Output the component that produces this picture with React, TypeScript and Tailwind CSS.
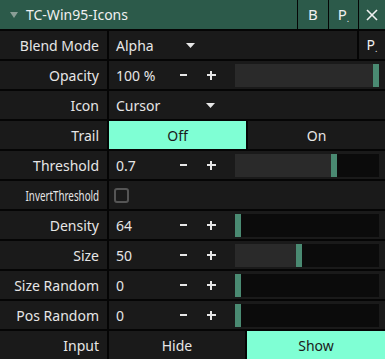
import React from "react";

const font = { fontFamily: '"Noto Sans", "Open Sans", sans-serif' };

function Label({ children, small }: { children: React.ReactNode; small?: boolean }) {
  return (
    <div className="w-[107px] shrink-0 bg-[#1a1a1a] flex items-center justify-end pr-[8px] text-[#e6e6e6] overflow-hidden">
      {small ? (
        <span className="text-[14px] whitespace-nowrap inline-block origin-right scale-x-[0.7]">{children}</span>
      ) : (
        <span className="text-[14px] whitespace-nowrap">{children}</span>
      )}
    </div>
  );
}

function Row({ children }: { children: React.ReactNode }) {
  return <div className="flex h-[28px] gap-[2px]">{children}</div>;
}

function Arrow() {
  return (
    <svg width="9" height="5" viewBox="0 0 9 5">
      <polygon points="0,0 9,0 4.5,5" fill="#e6e6e6" />
    </svg>
  );
}

function PDot({ size = 14 }: { size?: number }) {
  return (
    <span className="text-[#f0f0f0] leading-none" style={{ fontSize: size }}>
      P<span className="text-[9px] relative top-[2px]">.</span>
    </span>
  );
}

function SliderRow({ label, value, handle, small }: { label: string; value: string; handle: number; small?: boolean }) {
  return (
    <Row>
      <Label small={small}>{label}</Label>
      <div className="flex-1 bg-[#1a1a1a] flex items-center text-[#e6e6e6]">
        <div className="w-[60px] pl-[7px] text-[14px]">{value}</div>
        <div className="w-[28px] flex justify-center">
          <div className="w-[7px] h-[2px] bg-[#e6e6e6]" />
        </div>
        <div className="w-[28px] flex justify-center items-center relative h-[10px]">
          <div className="w-[9px] h-[2px] bg-[#e6e6e6] absolute" />
          <div className="w-[2px] h-[9px] bg-[#e6e6e6] absolute" />
        </div>
        <div className="flex-1 ml-[10px] mr-[6px] h-[23px] bg-[#0b0b0b] flex">
          <div className="h-full bg-[#2a2a2a]" style={{ width: handle }} />
          <div className="h-full w-[6px] bg-[#4a8a72]" />
        </div>
      </div>
    </Row>
  );
}

export default function App() {
  return (
    <div className="w-[385px] h-[359px] bg-[#050505] flex flex-col gap-[2px] overflow-hidden" style={font}>
      {/* Header */}
      <div className="flex h-[29px] gap-[1px]">
        <div className="w-[297px] bg-[#2c5a4a] flex items-center">
          <svg width="8" height="6" viewBox="0 0 8 6" className="ml-[10px]">
            <polygon points="0,0 8,0 4,6" fill="#8a9e96" />
          </svg>
          <span className="ml-[8px] text-[14px] text-[#f0f0f0] whitespace-nowrap">TC-Win95-Icons</span>
        </div>
        <div className="w-[30px] bg-[#2c5a4a] flex items-center justify-center text-[15px] text-[#f0f0f0]">B</div>
        <div className="w-[29px] bg-[#2c5a4a] flex items-center justify-center">
          <PDot size={15} />
        </div>
        <div className="flex-1 bg-[#2c5a4a] flex items-center justify-center">
          <svg width="12" height="12" viewBox="0 0 12 12">
            <line x1="1" y1="1" x2="11" y2="11" stroke="#f0f0f0" strokeWidth="1.6" />
            <line x1="11" y1="1" x2="1" y2="11" stroke="#f0f0f0" strokeWidth="1.6" />
          </svg>
        </div>
      </div>

      {/* Blend Mode */}
      <Row>
        <Label>Blend Mode</Label>
        <div className="w-[248px] bg-[#1a1a1a] flex items-center text-[#e6e6e6] text-[14px]">
          <div className="w-[77px] pl-[7px]">Alpha</div>
          <Arrow />
        </div>
        <div className="flex-1 bg-[#1a1a1a] flex items-center justify-center">
          <PDot />
        </div>
      </Row>

      <SliderRow label="Opacity" value="100 %" handle={138} />

      {/* Icon */}
      <Row>
        <Label>Icon</Label>
        <div className="flex-1 bg-[#1a1a1a] flex items-center text-[#e6e6e6] text-[14px]">
          <div className="w-[97px] pl-[7px]">Cursor</div>
          <Arrow />
        </div>
      </Row>

      {/* Trail */}
      <Row>
        <Label>Trail</Label>
        <div className="w-[137px] bg-[#7fffd4] flex items-center justify-center text-[#1a1a1a] text-[14px]">Off</div>
        <div className="flex-1 bg-[#1a1a1a] flex items-center justify-center text-[#e6e6e6] text-[14px]">On</div>
      </Row>

      <SliderRow label="Threshold" value="0.7" handle={96} />

      {/* InvertThreshold */}
      <Row>
        <Label small>InvertThreshold</Label>
        <div className="flex-1 bg-[#1a1a1a] flex items-center">
          <div className="ml-[5px] w-[15px] h-[15px] rounded-[3px] border-2 border-[#555555]" />
        </div>
      </Row>

      <SliderRow label="Density" value="64" handle={0} />
      <SliderRow label="Size" value="50" handle={61} />
      <SliderRow label="Size Random" value="0" handle={0} />
      <SliderRow label="Pos Random" value="0" handle={0} />

      {/* Input */}
      <Row>
        <Label>Input</Label>
        <div className="w-[136px] bg-[#1a1a1a] flex items-center justify-center text-[#e6e6e6] text-[14px]">Hide</div>
        <div className="flex-1 bg-[#7fffd4] flex items-center justify-center text-[#1a1a1a] text-[14px]">Show</div>
      </Row>
    </div>
  );
}
